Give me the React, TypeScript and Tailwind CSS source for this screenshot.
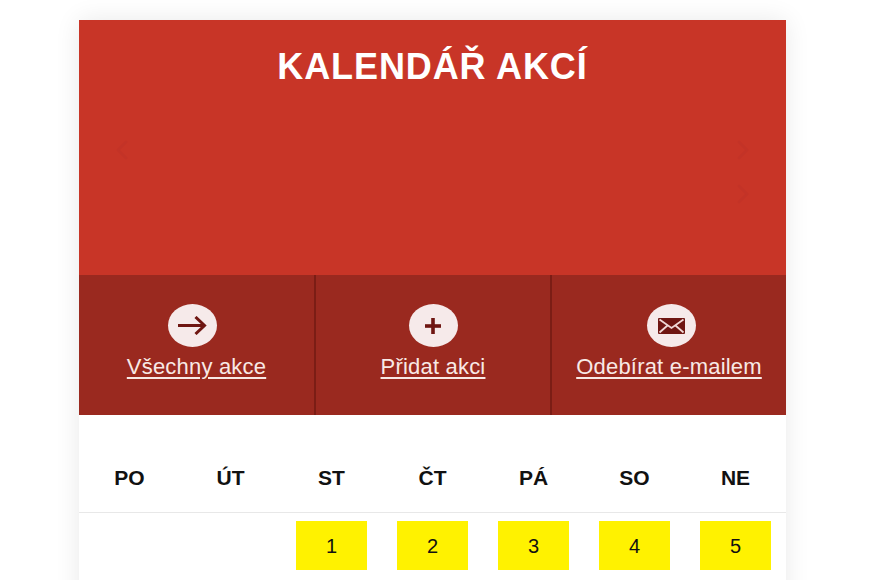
import React from 'react';
import { ChevronLeft, ChevronRight } from 'lucide-react';

const days = ['PO', 'ÚT', 'ST', 'ČT', 'PÁ', 'SO', 'NE'];
const firstWeek = [null, null, 1, 2, 3, 4, 5];

function ArrowIcon() {
  return (
    <svg viewBox="0 0 29 19" className="w-[29px] h-[19px]" fill="none" stroke="#6f1612" strokeWidth="3">
      <path d="M0 9.5 H26" />
      <path d="M17.5 1 L26.5 9.5 L17.5 18" />
    </svg>
  );
}

function PlusIcon() {
  return (
    <svg viewBox="0 0 18 16" className="w-[18px] h-[16px]" fill="none" stroke="#6f1612" strokeWidth="3.6">
      <path d="M1 8 H17" />
      <path d="M9 0 V16" />
    </svg>
  );
}

function MailIcon() {
  return (
    <svg viewBox="0 0 27 16" className="w-[27px] h-[16px]">
      <rect x="0" y="0" width="27" height="16" rx="1" fill="#6f1612" />
      <path d="M1.5 1.5 L13.5 10 L25.5 1.5" fill="none" stroke="#f0d8d6" strokeWidth="1.8" />
      <path d="M1.5 14.5 L9.5 7.5 M25.5 14.5 L17.5 7.5" fill="none" stroke="#f0d8d6" strokeWidth="1.8" />
    </svg>
  );
}

function ActionLink({ icon, label, border, iconClass }: { icon: React.ReactNode; label: string; border?: boolean; iconClass?: string }) {
  return (
    <div className={`flex flex-col items-center pt-[29px] ${border ? 'border-r-2 border-[#7b1d15]' : ''}`}>
      <div className={`w-[49px] h-[43px] rounded-[50%] bg-[#f6eaea] flex items-center justify-center ${iconClass ?? ''}`}>
        {icon}
      </div>
      <a href="#" className="mt-[6px] text-[22px] tracking-[0.2px] leading-[28px] text-[#f8e9e6] underline underline-offset-[3px]">
        {label}
      </a>
    </div>
  );
}

export default function App() {
  return (
    <div className="h-[580px] overflow-hidden bg-white font-['Liberation_Sans',sans-serif] pt-[20px]">
      <div className="ml-[79px] w-[707px] h-[600px] bg-white shadow-[0_0_24px_rgba(0,0,0,0.09)]">
        {/* Header with empty carousel */}
        <div className="relative h-[255px] bg-[#c83527] pt-[25px]">
          <h1 className="text-center text-[36px] tracking-[0.9px] leading-[44px] font-bold text-white">KALENDÁŘ AKCÍ</h1>
          <ChevronLeft className="absolute left-[27px] top-[114px] w-[32px] h-[32px] text-[#c33327]" />
          <ChevronRight className="absolute right-[27px] top-[114px] w-[32px] h-[32px] text-[#c33327]" />
          <ChevronRight className="absolute right-[27px] top-[158px] w-[32px] h-[32px] text-[#c33327]" />
        </div>

        <div className="grid grid-cols-[237px_236px_234px] h-[140px] bg-[#9a291f]">
          <ActionLink border label="Všechny akce" iconClass="-translate-x-[4px]" icon={<ArrowIcon />} />
          <ActionLink border label="Přidat akci" icon={<PlusIcon />} />
          <ActionLink label="Odebírat e-mailem" iconClass="translate-x-[2px]" icon={<MailIcon />} />
        </div>

        <div className="grid grid-cols-7 h-[98px] pt-[46px] border-b border-[#e8e8e8]">
          {days.map((day) => (
            <div key={day} className="text-center text-[21px] leading-[34px] font-bold text-[#111]">
              {day}
            </div>
          ))}
        </div>

        <div className="grid grid-cols-7 pt-[8px]">
          {firstWeek.map((num, i) => (
            <div key={i} className="flex justify-center">
              {num && (
                <div className="w-[71px] h-[49px] bg-[#fff200] flex items-center justify-center text-[20px] text-[#111]">
                  {num}
                </div>
              )}
            </div>
          ))}
        </div>
      </div>
    </div>
  );
}
